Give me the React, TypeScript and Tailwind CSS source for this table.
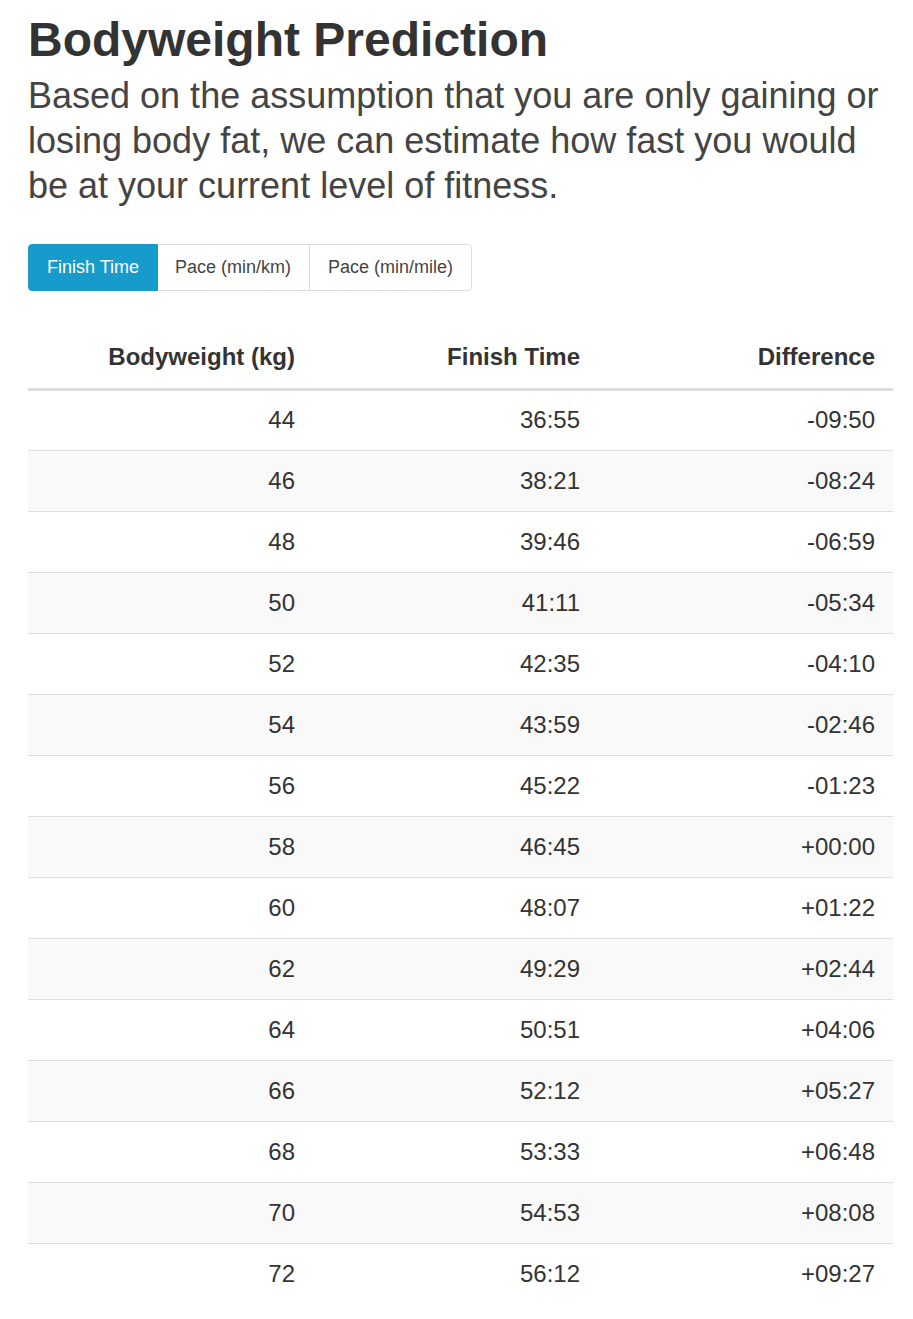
import React from "react";

const rows: [string, string, string][] = [
  ["44", "36:55", "-09:50"],
  ["46", "38:21", "-08:24"],
  ["48", "39:46", "-06:59"],
  ["50", "41:11", "-05:34"],
  ["52", "42:35", "-04:10"],
  ["54", "43:59", "-02:46"],
  ["56", "45:22", "-01:23"],
  ["58", "46:45", "+00:00"],
  ["60", "48:07", "+01:22"],
  ["62", "49:29", "+02:44"],
  ["64", "50:51", "+04:06"],
  ["66", "52:12", "+05:27"],
  ["68", "53:33", "+06:48"],
  ["70", "54:53", "+08:08"],
  ["72", "56:12", "+09:27"],
];

const tabs = ["Finish Time", "Pace (min/km)", "Pace (min/mile)"];

export default function App() {
  return (
    <div
      className="bg-white text-[#333] pl-[28px] pr-[20px] pt-[12px] pb-[20px]"
      style={{ fontFamily: '"Liberation Sans", Arial, sans-serif' }}
    >
      <h1 className="text-[48px] font-bold leading-[56px]">Bodyweight Prediction</h1>
      <p className="text-[36px] leading-[45px] mt-[5px] text-[#444]">
        Based on the assumption that you are only gaining or losing body fat, we can estimate how fast you would be
        at your current level of fitness.
      </p>

      {/* Tabs */}
      <div className="flex mt-[36px]">
        {tabs.map((t, i) => (
          <button
            key={t}
            className={
              i === 0
                ? "h-[47px] px-[18px] text-[18px] bg-[#179bcb] text-white rounded-l-[4px] border border-[#179bcb]"
                : i === 1
                ? "h-[47px] pl-[17px] pr-[18px] text-[18px] bg-white text-[#444] border-y border-[#ddd]"
                : "h-[47px] px-[18px] text-[18px] bg-white text-[#444] border border-[#ddd] rounded-r-[4px]"
            }
          >
            {t}
          </button>
        ))}
      </div>

      {/* Table */}
      <table className="w-full mt-[36px] border-collapse text-[24px]">
        <thead>
          <tr className="border-b-[3px] border-[#ddd]">
            <th className="w-[285px] h-[62px] text-right pr-[18px] font-bold">Bodyweight (kg)</th>
            <th className="w-[285px] text-right pr-[18px] font-bold">Finish Time</th>
            <th className="text-right pr-[18px] font-bold">Difference</th>
          </tr>
        </thead>
        <tbody>
          {rows.map((r, i) => (
            <tr key={r[0]} className={(i % 2 === 1 ? "bg-[#f9f9f9] " : "") + "border-b border-[#ddd] last:border-b-0"}>
              <td className="h-[61px] text-right pr-[18px]">{r[0]}</td>
              <td className="text-right pr-[18px]">{r[1]}</td>
              <td className="text-right pr-[18px]">{r[2]}</td>
            </tr>
          ))}
        </tbody>
      </table>
    </div>
  );
}
